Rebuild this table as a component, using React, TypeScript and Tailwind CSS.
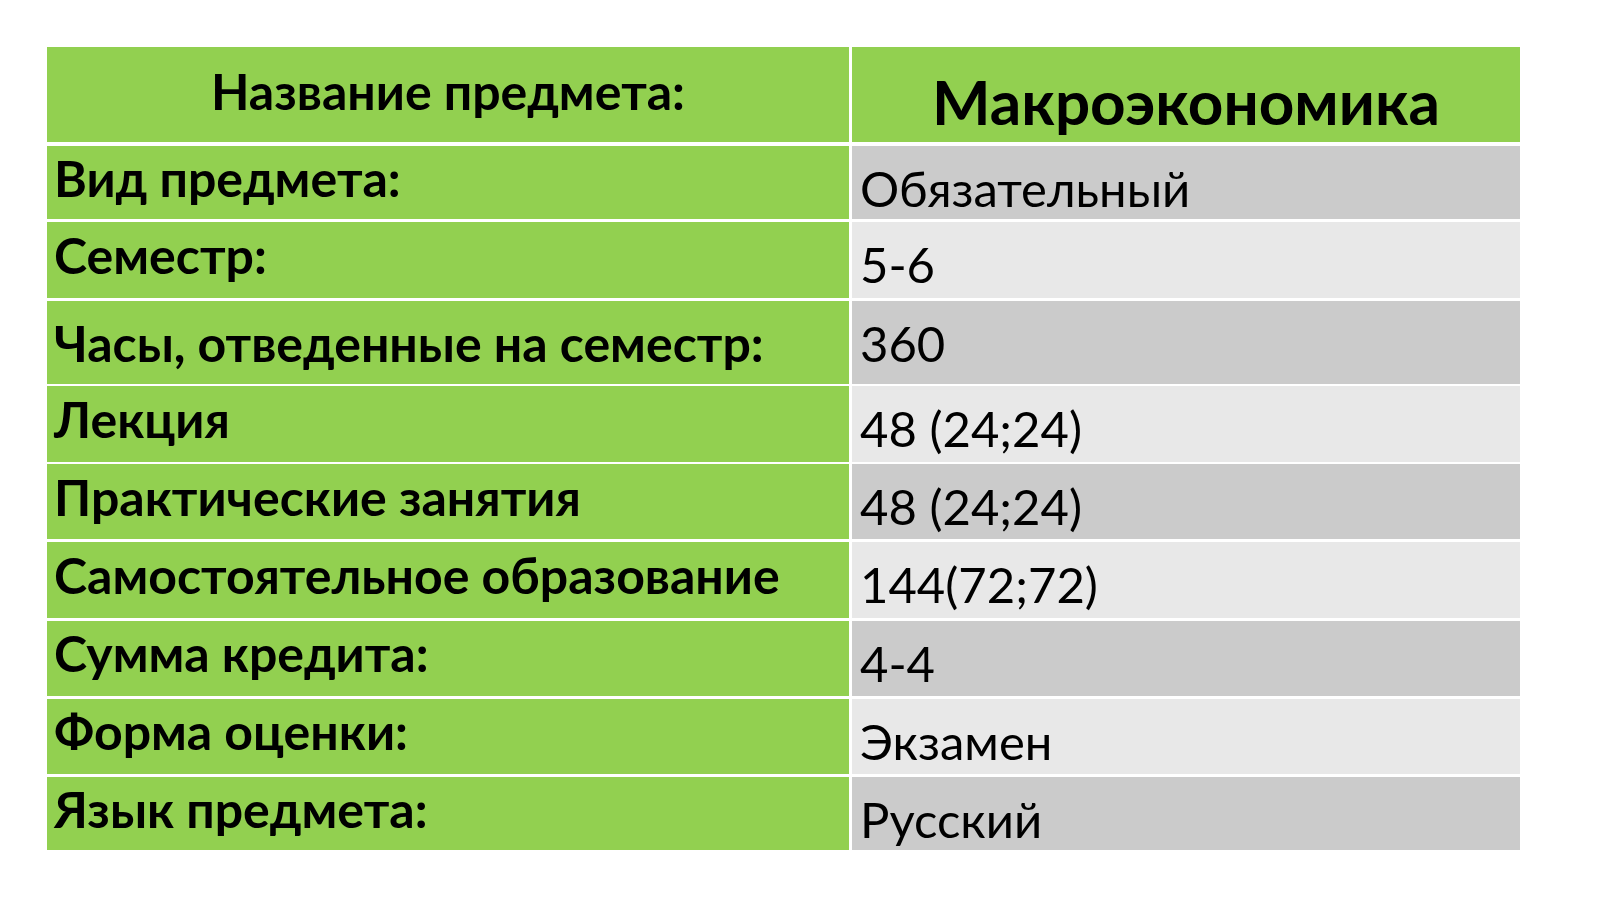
import React from "react";

type Row = { label: string; value: string; h: string; mt: string; lp: string };

const rows: Row[] = [
  { label: "Вид предмета:", value: "Обязательный", h: "h-[73px]", mt: "mt-[4px]", lp: "pt-[2px]" },
  { label: "Семестр:", value: "5-6", h: "h-[76px]", mt: "mt-[3px]", lp: "pt-[3px]" },
  { label: "Часы, отведенные на семестр:", value: "360", h: "h-[83px]", mt: "mt-[3px]", lp: "pt-[12px]" },
  { label: "Лекция", value: "48 (24;24)", h: "h-[76px]", mt: "mt-[2px]", lp: "pt-[3px]" },
  { label: "Практические занятия", value: "48 (24;24)", h: "h-[75px]", mt: "mt-[2px]", lp: "pt-[3px]" },
  { label: "Самостоятельное образование", value: "144(72;72)", h: "h-[76px]", mt: "mt-[3px]", lp: "pt-[3px]" },
  { label: "Сумма кредита:", value: "4-4", h: "h-[75px]", mt: "mt-[3px]", lp: "pt-[2px]" },
  { label: "Форма оценки:", value: "Экзамен", h: "h-[75px]", mt: "mt-[3px]", lp: "pt-[2px]" },
  { label: "Язык предмета:", value: "Русский", h: "h-[73px]", mt: "mt-[3px]", lp: "pt-[2px]" },
];

export default function App() {
  return (
    <div className="w-[1600px] h-[899px] bg-white overflow-hidden text-black" style={{ fontFamily: "Lato, 'Noto Sans', sans-serif" }}>
      <div className="ml-[47px] pt-[47px] w-[1473px] flex flex-col">
        <div className="flex h-[95px] gap-[3px]">
          <div className="w-[802px] bg-[#92d050] flex justify-center pt-[14px]">
            <span className="text-[50px] leading-[60px] font-bold whitespace-nowrap">Название предмета:</span>
          </div>
          <div className="w-[668px] bg-[#92d050] flex justify-center pt-[17px]">
            <span className="text-[62px] leading-[74px] font-bold whitespace-nowrap">Макроэкономика</span>
          </div>
        </div>
        {rows.map((r, i) => (
          <div key={i} className={`flex gap-[3px] ${r.h} ${r.mt}`}>
            <div className={`w-[802px] bg-[#92d050] pl-[7px] ${r.lp}`}>
              <span className="text-[50px] leading-[60px] font-bold whitespace-nowrap">{r.label}</span>
            </div>
            <div className={`w-[668px] pl-[8px] pt-[13px] ${i % 2 === 0 ? "bg-[#cbcbcb]" : "bg-[#e8e8e8]"}`}>
              <span className="text-[49px] leading-[59px] whitespace-nowrap">{r.value}</span>
            </div>
          </div>
        ))}
      </div>
    </div>
  );
}
